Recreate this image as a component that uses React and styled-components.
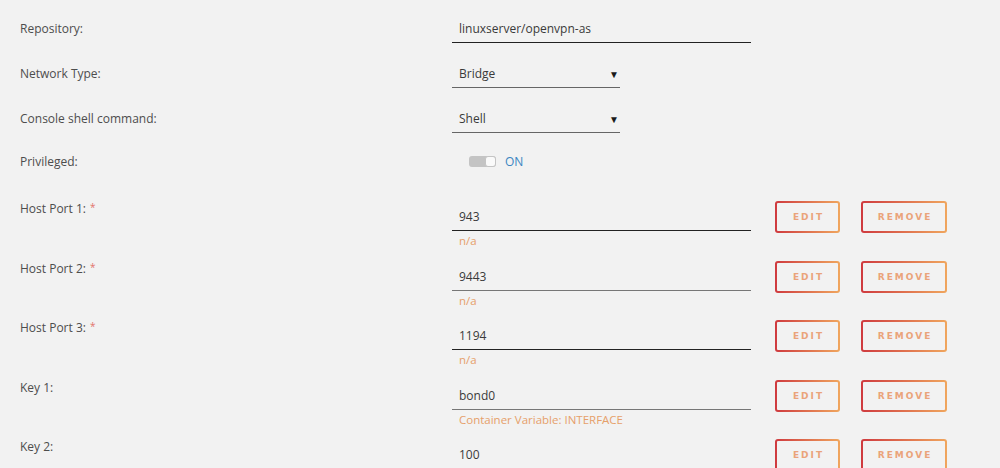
import React from "react";
import styled, { createGlobalStyle } from "styled-components";

const GlobalStyle = createGlobalStyle`
	html, body {
		margin: 0;
		padding: 0;
		background: #f2f2f2;
		font-family: "Open Sans", "Noto Sans", sans-serif;
	}
`;

const ports = [
	{ label: "Host Port 1:", value: "943", note: "n/a", required: true, line: "#222" },
	{ label: "Host Port 2:", value: "9443", note: "n/a", required: true, line: "#777" },
	{ label: "Host Port 3:", value: "1194", note: "n/a", required: true, line: "#222" },
	{ label: "Key 1:", value: "bond0", note: "Container Variable: INTERFACE", line: "#777" },
	{ label: "Key 2:", value: "100", note: "", line: "#222" },
];

export default function App() {
	return (
		<>
			<GlobalStyle />
			<Page>
				<Row height={45}>
					<Label>Repository:</Label>
					<Field line="#222">linuxserver/openvpn-as</Field>
				</Row>

				<Row height={45}>
					<Label>Network Type:</Label>
					<Select line="#666">
						Bridge
						<Caret>▼</Caret>
					</Select>
				</Row>

				<Row height={43}>
					<Label>Console shell command:</Label>
					<Select line="#666">
						Shell
						<Caret>▼</Caret>
					</Select>
				</Row>

				<Row height={54}>
					<Label>Privileged:</Label>
					<SwitchWrap>
						<Track>
							<Knob />
						</Track>
						<SwitchText>ON</SwitchText>
					</SwitchWrap>
				</Row>

				{ports.map((p) => (
					<PortRow key={p.label}>
						<PortLabel>
							{p.label}
							{p.required && <Required>*</Required>}
						</PortLabel>
						<div>
							<PortField line={p.line}>{p.value}</PortField>
							{p.note && <Note>{p.note}</Note>}
						</div>
						<Buttons>
							<Button width={65}>EDIT</Button>
							<Button width={86}>REMOVE</Button>
						</Buttons>
					</PortRow>
				))}
			</Page>
		</>
	);
}

const Page = styled.div`
	padding: 14px 0 0 20px;
	height: 468px;
	box-sizing: border-box;
	overflow: hidden;
`;

const Row = styled.div`
	display: grid;
	grid-template-columns: 432px 299px;
	height: ${(p) => p.height}px;
`;

const Label = styled.div`
	font-size: 12px;
	line-height: 20px;
	padding-top: 5px;
	color: #4d4d4d;
`;

const Field = styled.div`
	font-size: 12px;
	line-height: 20px;
	padding: 5px 7px 3px;
	color: #3a3a3a;
	border-bottom: 1.5px solid ${(p) => p.line};
	align-self: start;
`;

const Select = styled(Field)`
	width: 168px;
	box-sizing: border-box;
	display: flex;
	justify-content: space-between;
	align-items: center;
	padding-right: 1px;
`;

const Caret = styled.span`
	font-size: 10px;
	color: #1a1a1a;
`;

const SwitchWrap = styled.div`
	display: flex;
	align-items: center;
	gap: 9px;
	padding: 4px 0 0 17px;
	height: 20px;
`;

const Track = styled.div`
	position: relative;
	width: 27px;
	height: 11px;
	border-radius: 3px;
	background: #c4c4c4;
`;

const Knob = styled.div`
	position: absolute;
	right: 0;
	top: 0;
	width: 11px;
	height: 11px;
	box-sizing: border-box;
	border-radius: 3px;
	background: #fafafa;
	border: 1px solid #c4c4c4;
`;

const SwitchText = styled.span`
	font-size: 12px;
	color: #3b86c2;
`;

const PortRow = styled.div`
	display: grid;
	grid-template-columns: 432px 299px auto;
	height: 59.5px;
`;

const PortLabel = styled.div`
	font-size: 12px;
	line-height: 16px;
	height: 16px;
	color: #4d4d4d;
`;

const Required = styled.span`
	position: relative;
	top: -2px;
	color: #e2746c;
	font-size: 10px;
	line-height: 0;
	margin-left: 4px;
`;

const PortField = styled(Field)`
	padding: 6px 7px 3px;
`;

const Note = styled.div`
	font-size: 11.5px;
	line-height: 14px;
	margin-top: 3px;
	padding-left: 7px;
	color: #e6a06a;
`;

const Buttons = styled.div`
	display: flex;
	gap: 21px;
	padding-left: 24px;
	align-items: flex-start;
`;

const Button = styled.div`
	width: ${(p) => p.width}px;
	height: 32px;
	box-sizing: border-box;
	border: 2px solid transparent;
	border-radius: 3px;
	background:
		linear-gradient(#f2f2f2, #f2f2f2) padding-box,
		linear-gradient(90deg, #cf3a3f, #f0a65e) border-box;
	display: flex;
	align-items: center;
	justify-content: center;
	font-family: "DejaVu Sans", sans-serif;
	font-weight: bold;
	font-size: 9px;
	letter-spacing: 2px;
	padding-left: 2px;
	color: #eaa37a;
`;
